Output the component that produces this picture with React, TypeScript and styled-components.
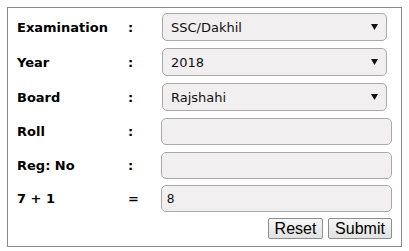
import React from "react";
import styled, { createGlobalStyle } from "styled-components";

const Global = createGlobalStyle`
  body {
    margin: 0;
    background: #fff;
    font-family: "DejaVu Sans", Verdana, sans-serif;
  }
`;

const Box = styled.form`
  margin: 7px;
  width: 395px;
  height: 240px;
  box-sizing: border-box;
  border: 1px solid #8a8a8a;
  padding: 5px 9px 7px 9px;
  display: grid;
  grid-template-columns: 110px 34px 1fr;
  align-items: center;
`;

const Label = styled.div<{ $gap: number }>`
  font-size: 13px;
  font-weight: bold;
  color: #000;
  margin-top: ${(p) => p.$gap}px;
`;

const Sep = styled.div<{ $gap: number }>`
  font-size: 13px;
  font-weight: bold;
  color: #000;
  padding-left: 1px;
  margin-top: ${(p) => p.$gap}px;
`;

const SelectWrap = styled.div<{ $gap: number }>`
  position: relative;
  margin-top: ${(p) => p.$gap}px;
  margin-left: 1px;
  width: 225px;
  height: 28px;
`;

const Select = styled.select`
  appearance: none;
  width: 100%;
  height: 100%;
  box-sizing: border-box;
  border: 1px solid #a9a9a9;
  border-radius: 5px;
  background: #f2eff0;
  font-family: "DejaVu Sans", Verdana, sans-serif;
  font-size: 13px;
  color: #111;
  padding: 0 0 0 8px;
  outline: none;
`;

const Arrow = styled.svg`
  position: absolute;
  right: 9px;
  top: 11px;
  pointer-events: none;
`;

const Input = styled.input<{ $gap: number }>`
  margin-top: ${(p) => p.$gap}px;
  width: 100%;
  height: 27px;
  box-sizing: border-box;
  border: 1px solid #a9a9a9;
  border-radius: 5px;
  background: #f2eff0;
  font-family: "Liberation Sans", Arial, sans-serif;
  font-size: 13px;
  color: #000;
  padding: 0 5px;
  outline: none;
`;

const Actions = styled.div`
  grid-column: 1 / -1;
  margin-top: 6px;
  display: flex;
  justify-content: flex-end;
  gap: 5px;
`;

const Button = styled.button<{ $w: number }>`
  width: ${(p) => p.$w}px;
  height: 21px;
  padding: 0;
  border: 1px solid #8e8e8e;
  border-radius: 2px;
  background: linear-gradient(#f7f7f7, #e1e1e1);
  font-family: "Liberation Sans", Arial, sans-serif;
  font-size: 16px;
  color: #000;
  line-height: 19px;
`;

const selects = [
  { label: "Examination", value: "SSC/Dakhil", gap: 0 },
  { label: "Year", value: "2018", gap: 7 },
  { label: "Board", value: "Rajshahi", gap: 7 },
];

const inputs = [
  { label: "Roll", sep: ":", value: "", gap: 7 },
  { label: "Reg: No", sep: ":", value: "", gap: 6 },
  { label: "7 + 1", sep: "=", value: "8", gap: 6 },
];

export default function App() {
  return (
    <>
      <Global />
      <Box onSubmit={(e) => e.preventDefault()}>
        {selects.map((s) => (
          <React.Fragment key={s.label}>
            <Label $gap={s.gap}>{s.label}</Label>
            <Sep $gap={s.gap}>:</Sep>
            <SelectWrap $gap={s.gap}>
              <Select defaultValue={s.value}>
                <option>{s.value}</option>
              </Select>
              <Arrow width="7" height="6" viewBox="0 0 7 6">
                <path d="M0 0H7L3.5 6Z" fill="#111" />
              </Arrow>
            </SelectWrap>
          </React.Fragment>
        ))}
        {inputs.map((i) => (
          <React.Fragment key={i.label}>
            <Label $gap={i.gap}>{i.label}</Label>
            <Sep $gap={i.gap}>{i.sep}</Sep>
            <Input $gap={i.gap} defaultValue={i.value} />
          </React.Fragment>
        ))}
        <Actions>
          <Button type="reset" $w={55}>Reset</Button>
          <Button type="submit" $w={64}>Submit</Button>
        </Actions>
      </Box>
    </>
  );
}
